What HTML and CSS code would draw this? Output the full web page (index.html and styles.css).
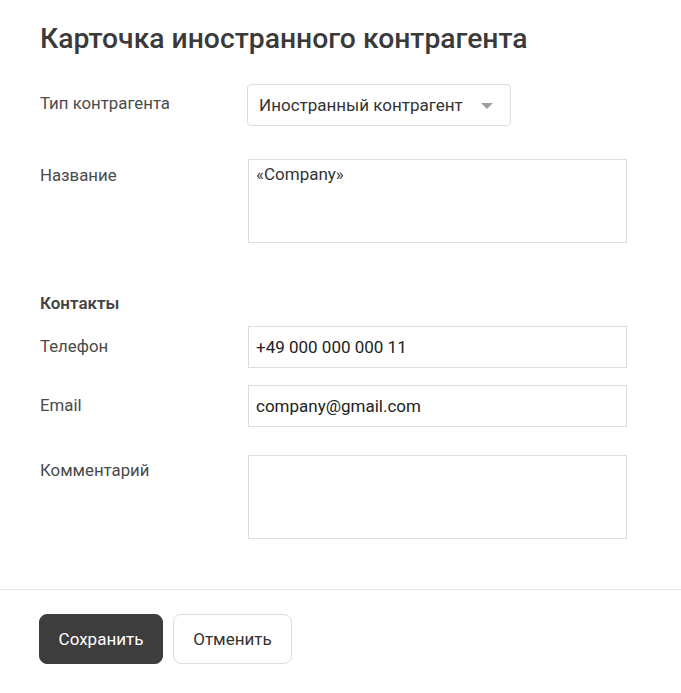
FILE: index.html
```html
<!DOCTYPE html>
<html lang="ru">
<head>
<meta charset="utf-8">
<link rel="stylesheet" href="styles.css">
</head>
<body>
<div class="card">
  <div class="content">
    <h1 class="title">Карточка иностранного контрагента</h1>
    <div class="row row-select">
      <div class="label">Тип контрагента</div>
      <div class="select">
        <span>Иностранный контрагент</span>
        <svg class="arrow" width="12" height="6" viewBox="0 0 12 6"><path d="M0 0 L12 0 L6 6 Z" fill="#9e9e9e"/></svg>
      </div>
    </div>
    <div class="row row-name">
      <div class="label">Название</div>
      <div class="textarea">«Company»</div>
    </div>
    <div class="section">Контакты</div>
    <div class="row row-phone">
      <div class="label">Телефон</div>
      <div class="input">+49 000 000 000 11</div>
    </div>
    <div class="row row-email">
      <div class="label">Email</div>
      <div class="input">company@gmail.com</div>
    </div>
    <div class="row row-comment">
      <div class="label">Комментарий</div>
      <div class="textarea"></div>
    </div>
  </div>
  <div class="footer">
    <button class="btn btn-primary">Сохранить</button>
    <button class="btn btn-secondary">Отменить</button>
  </div>
</div>
</body>
</html>
```
FILE: styles.css
```css
html, body {
  margin: 0;
  padding: 0;
  background: #fff;
}
body {
  font-family: "Roboto", "Liberation Sans", sans-serif;
  color: #333;
  width: 681px;
}
.content {
  padding: 23px 54px 50px 40px;
}
.title {
  margin: 0;
  font-size: 28.3px;
  font-weight: 500;
  line-height: 32px;
  color: #3a3a3a;
}
.row {
  display: flex;
  align-items: flex-start;
}
.label {
  width: 208px;
  flex: none;
  font-size: 16.8px;
  line-height: 20px;
  color: #4a4a4a;
}
.row-select { margin-top: 29px; }
.row-select .label { padding-top: 9px; }
.select {
  box-sizing: border-box;
  width: 264px;
  height: 42px;
  margin-left: -1px;
  border: 1px solid #ddd;
  border-radius: 4px;
  display: flex;
  align-items: center;
  justify-content: space-between;
  padding: 0 17px 0 11px;
  font-size: 17px;
  color: #333;
}
.arrow { margin-top: 2px; }
.row-name { margin-top: 33px; }
.row-name .label { padding-top: 6px; }
.textarea {
  box-sizing: border-box;
  flex: 1;
  height: 84px;
  border: 1px solid #ddd;
  padding: 4px 7px;
  font-size: 17px;
  line-height: 20px;
  color: #333;
}
.section {
  margin-top: 50px;
  font-size: 17px;
  font-weight: 600;
  line-height: 20px;
  color: #444;
}
.row-phone { margin-top: 13px; }
.row-email { margin-top: 17px; }
.row-phone .label, .row-email .label { padding-top: 10px; }
.input {
  box-sizing: border-box;
  flex: 1;
  height: 42px;
  border: 1px solid #ddd;
  padding: 0 7px;
  display: flex;
  align-items: center;
  font-size: 17px;
  color: #222;
}
.row-comment { margin-top: 28px; }
.row-comment .label { padding-top: 5px; }
.footer {
  border-top: 1px solid #e6e6e6;
  padding: 24px 0 0 39px;
  display: flex;
  gap: 10px;
}
.btn {
  box-sizing: border-box;
  height: 50px;
  border-radius: 8px;
  font-family: "Roboto", "Liberation Sans", sans-serif;
  font-size: 17px;
  padding: 0;
  cursor: pointer;
}
.btn-primary {
  width: 124px;
  background: #3d3d3d;
  border: 1px solid #3d3d3d;
  color: #fff;
}
.btn-secondary {
  width: 119px;
  background: #fff;
  border: 1px solid #ddd;
  color: #333;
}
```
